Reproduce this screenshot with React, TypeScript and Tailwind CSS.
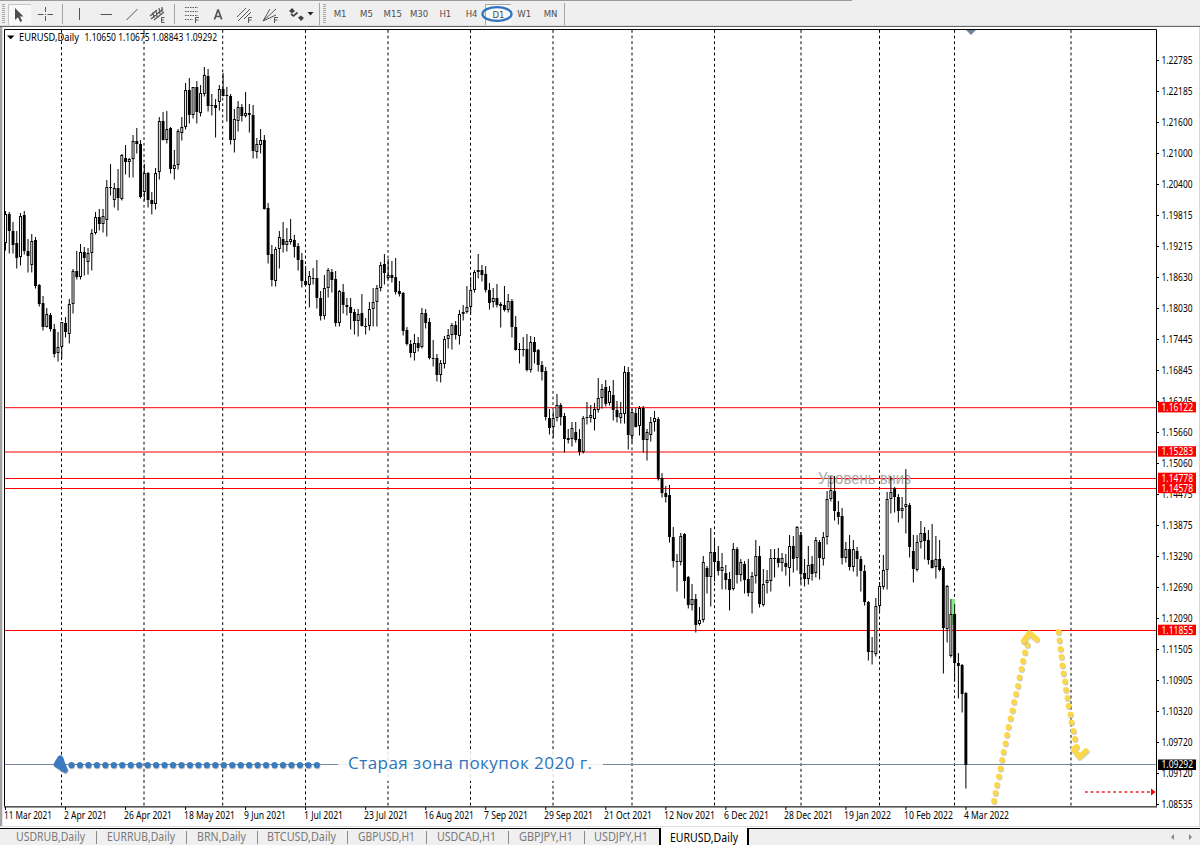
import React from "react";

type Candle = [number, number, number, number, number];

// high, body top, body bottom, low, 1 = up / 0 = down (chart units, y grows downwards)
const candles: Candle[] = [
  [211,214,243,250,1],[212,214,231,253,0],[222,231,245,253,0],[231,243,258,268,0],[213,216,257,265,1],[211,215,251,254,0],[239,251,256,272,0],[234,241,265,272,1],
  [237,240,286,288,0],[284,285,304,306,0],[296,303,327,330,0],[308,314,327,327,1],[313,315,329,331,0],[324,329,354,357,0],[332,347,353,361,1],[322,322,347,358,1],
  [317,323,332,337,0],[299,304,334,343,1],[269,271,304,313,1],[251,271,277,279,0],[244,252,277,279,1],[247,252,258,275,0],[248,253,262,274,1],[229,233,253,270,1],
  [212,217,233,234,1],[209,217,224,230,0],[209,216,224,232,1],[180,187,220,236,1],[164,187,188,195,0],[183,188,200,207,1],[169,188,198,210,0],[154,155,199,200,1],
  [145,158,162,174,0],[158,159,162,177,1],[135,141,159,177,1],[128,141,144,153,0],[140,144,197,198,0],[164,173,192,200,1],[172,173,200,207,0],[192,200,204,214,0],
  [168,173,204,209,1],[117,121,172,179,1],[112,121,140,140,0],[111,129,140,143,1],[127,128,169,173,0],[150,165,169,179,1],[129,131,165,169,1],[117,127,133,140,1],
  [83,90,127,129,1],[78,90,115,123,0],[87,87,115,118,1],[81,87,112,123,0],[85,93,113,116,1],[67,75,94,96,1],[69,76,106,111,0],[94,105,106,115,0],
  [99,105,108,137,0],[85,89,102,110,1],[73,89,96,96,0],[87,95,96,121,0],[94,96,140,144,0],[109,119,140,152,1],[101,107,121,131,1],[104,107,116,121,0],
  [92,113,116,117,1],[104,113,115,132,0],[105,115,151,158,0],[138,144,152,158,1],[129,140,145,153,1],[135,140,209,209,0],[203,208,255,263,0],[245,254,280,286,0],
  [247,249,281,286,1],[231,237,249,268,1],[222,239,245,252,0],[228,241,245,251,1],[219,239,242,244,1],[235,240,247,257,0],[243,246,260,270,0],[253,260,281,287,0],
  [266,281,285,285,0],[271,276,285,307,1],[268,278,279,284,0],[260,278,298,308,0],[291,298,316,320,0],[275,288,316,319,1],[268,270,288,297,1],[269,272,280,292,0],
  [271,279,323,326,0],[290,291,323,326,1],[284,292,305,313,0],[298,305,307,315,0],[298,307,313,329,0],[309,312,321,334,0],[309,314,321,336,1],[294,313,326,326,0],
  [318,326,327,334,0],[302,309,326,330,1],[288,302,309,326,1],[285,288,302,326,1],[262,265,288,291,1],[254,264,273,284,0],[259,275,278,279,1],[261,275,278,282,0],
  [258,277,292,294,0],[281,291,294,296,0],[292,293,331,335,0],[327,330,344,345,0],[340,344,353,357,0],[334,343,353,360,1],[337,343,348,351,0],[308,313,347,348,1],
  [309,313,323,328,0],[318,322,358,359,0],[340,358,359,366,0],[354,358,375,381,0],[360,363,375,382,1],[336,339,364,368,1],[329,335,339,348,1],[323,325,335,349,1],
  [321,325,335,339,0],[310,314,336,344,1],[305,312,314,320,0],[286,307,312,313,1],[277,290,307,314,1],[270,272,290,292,1],[254,270,272,278,1],[265,270,275,281,0],
  [266,274,290,292,0],[283,290,303,309,0],[288,298,302,307,1],[284,298,305,307,0],[302,304,306,327,0],[286,305,310,311,0],[294,301,310,312,1],[299,301,327,337,0],
  [316,327,350,350,0],[343,349,350,363,0],[337,349,350,356,0],[334,349,370,371,0],[336,342,370,372,1],[337,342,352,363,0],[349,350,365,371,0],[361,365,372,380,0],
  [367,371,417,420,0],[409,418,428,434,0],[411,418,427,437,1],[394,405,418,421,1],[403,405,417,425,0],[413,416,439,452,0],[429,438,440,443,0],[422,428,439,446,1],
  [422,432,440,442,0],[429,439,452,455,0],[416,418,452,453,1],[402,417,418,424,0],[405,415,418,422,1],[403,409,419,430,1],[378,398,410,412,1],[384,389,398,408,1],
  [380,387,404,406,0],[386,391,403,405,1],[380,395,410,420,0],[401,410,417,422,0],[402,413,418,423,1],[366,372,414,423,1],[367,372,435,449,0],[409,412,436,442,1],
  [408,413,427,427,0],[406,408,426,435,1],[406,408,440,452,0],[429,432,440,460,1],[417,422,435,441,1],[411,418,422,431,1],[417,419,479,480,0],[473,478,493,497,0],
  [486,493,497,502,0],[485,495,537,542,0],[527,537,561,567,0],[554,561,562,591,0],[533,536,562,565,1],[533,534,581,598,0],[576,577,605,608,0],[584,599,605,610,1],
  [594,599,625,632,0],[607,620,624,625,1],[556,562,620,622,1],[566,568,577,593,0],[528,552,577,606,1],[540,552,562,581,0],[546,561,571,575,0],[553,567,571,589,1],
  [565,573,580,589,0],[572,579,590,610,0],[543,549,589,590,1],[547,549,575,583,0],[559,562,575,581,1],[561,564,580,593,0],[559,579,593,596,0],[572,576,593,613,1],
  [540,556,576,583,1],[546,556,604,607,0],[569,584,605,606,1],[570,580,583,593,1],[549,558,581,591,1],[549,558,559,577,0],[548,558,563,567,0],[553,558,563,571,1],
  [554,563,567,575,0],[535,546,568,586,1],[536,546,559,572,0],[526,527,558,570,1],[532,535,574,583,0],[559,573,579,586,0],[546,565,579,584,1],[556,564,574,580,0],
  [537,540,573,577,1],[540,542,558,579,0],[532,537,559,565,1],[491,499,537,544,1],[476,490,499,501,1],[476,491,511,520,0],[501,512,517,524,0],[508,516,558,564,0],
  [542,549,558,562,1],[535,549,567,570,0],[540,549,567,571,1],[547,551,559,576,0],[556,559,571,591,0],[565,571,602,605,0],[601,602,652,660,0],[637,651,652,664,0],
  [598,606,654,656,1],[582,586,606,612,1],[555,570,587,589,1],[492,499,570,589,1],[476,492,499,513,1],[487,488,497,512,0],[494,497,511,522,0],[497,508,511,518,1],
  [469,504,507,533,1],[503,505,547,557,0],[535,551,569,582,0],[535,542,570,571,1],[521,533,542,548,1],[527,533,541,559,0],[530,540,560,564,0],[524,560,568,568,0],
  [536,559,567,578,1],[540,559,570,571,0],[566,568,628,673,0],[585,586,629,642,1],[599,614,656,657,1],[604,614,663,681,0],[653,663,666,698,0],[664,665,694,712,0],
  [692,693,765,788,0],
];

const FIRST_X = 5.5;
const STEP = 3.7515;

const separators = [61.5, 144, 222.7, 305.5, 388, 470.5, 553, 632, 714.5, 801, 879.5, 954.5, 1071];

const prices = [
  "1.22785", "1.22185", "1.21600", "1.21000", "1.20400", "1.19815", "1.19215", "1.18630", "1.18030",
  "1.17445", "1.16845", "1.16245", "1.15660", "1.15060", "1.14475", "1.13875", "1.13290", "1.12690",
  "1.12090", "1.11505", "1.10905", "1.10320", "1.09720", "1.09120", "1.08535",
];

const levels = [
  { price: "1.16122", y: 407.7 },
  { price: "1.15283", y: 452 },
  { price: "1.14778", y: 478.5 },
  { price: "1.14578", y: 488.5 },
  { price: "1.11855", y: 630.5 },
];

const dates: [string, number][] = [
  ["11 Mar 2021", 48], ["2 Apr 2021", 43], ["26 Apr 2021", 48], ["18 May 2021", 51], ["9 Jun 2021", 42],
  ["1 Jul 2021", 39], ["23 Jul 2021", 44], ["16 Aug 2021", 50], ["7 Sep 2021", 44], ["29 Sep 2021", 49],
  ["21 Oct 2021", 48], ["12 Nov 2021", 51], ["6 Dec 2021", 45], ["28 Dec 2021", 49], ["19 Jan 2022", 47],
  ["10 Feb 2022", 49], ["4 Mar 2022", 45],
];

const upDots = [
  [994, 801], [995.5, 793], [997, 785], [999, 776.5], [1000.5, 768.5], [1002, 760], [1003.5, 752],
  [1005.5, 743.5], [1007, 735], [1008.5, 727], [1010.5, 718.5], [1012.5, 710.5], [1014, 702],
  [1016, 694], [1018, 686], [1019.5, 677.5], [1021.5, 669], [1023, 661], [1025, 652.5], [1027.5, 645],
];

const downDots = [
  [1058.5, 632], [1059.5, 640.5], [1060.5, 649], [1061.5, 657], [1062.5, 665.5], [1063.5, 673.5],
  [1065, 681.5], [1066, 690], [1067.5, 698], [1068.5, 706], [1070.5, 714.5], [1071.5, 722.5],
  [1073.5, 731], [1075, 739], [1076.5, 747],
];

const timeframes = ["M1", "M5", "M15", "M30", "H1", "H4", "D1", "W1", "MN"];

const tabs = [
  { name: "USDRUB,Daily", cls: "w-[93px] pl-[12px]", len: 69 },
  { name: "EURRUB,Daily", cls: "w-[90px] pl-[10px]", len: 68 },
  { name: "BRN,Daily", cls: "w-[71px] pl-[10px]", len: 49 },
  { name: "BTCUSD,Daily", cls: "w-[90px] pl-[9px]", len: 69 },
  { name: "GBPUSD,H1", cls: "w-[79px] pl-[10px]", len: 57 },
  { name: "USDCAD,H1", cls: "w-[82px] pl-[10px]", len: 59 },
  { name: "GBPJPY,H1", cls: "w-[76px] pl-[10px]", len: 54 },
  { name: "USDJPY,H1", cls: "w-[74px] pl-[9px]", len: 54 },
];

function Tool({ children }: { children: React.ReactNode }) {
  return (
    <svg width="26" height="22" viewBox="0 0 26 22" fill="none" stroke="#555" className="shrink-0">
      {children}
    </svg>
  );
}

function Grip() {
  return (
    <svg width="3" height="20" viewBox="0 0 3 20" className="shrink-0">
      <path d="M1.5 0V20" stroke="#aaa" strokeWidth="3" strokeDasharray="1 1" />
    </svg>
  );
}

function Toolbar() {
  return (
    <div className="relative flex h-[25px] shrink-0 items-center bg-[#efefef] pl-[2px] pt-[3px]">
      <div className="absolute left-0 top-0 h-px w-[852px] bg-[#9a9a9a]" />
      <Grip />
      <div className="ml-[3px] flex h-[21px] w-[23px] items-center justify-center border-l border-t border-[#c4c4c4] bg-[#f8f8f8] pr-[3px]">
        <svg width="12" height="16" viewBox="0 0 12 16">
          <path d="M2 1V13L5 10.3L7.2 15L9.2 14L7 9.5H10.5Z" fill="#4d4d4d" />
        </svg>
      </div>
      <div className="ml-[2px] flex items-center">
        <Tool>
          <path d="M12.5 4V9M12.5 13V18M5 11.5H10.5M14.5 11.5H20M12 11.5H13" />
        </Tool>
      </div>
      <div className="ml-[3px] h-[20px] w-px bg-[#a5a5a5]" />
      <div className="ml-[3px] flex items-center">
        <Tool>
          <path d="M13.5 5V17" />
        </Tool>
        <Tool>
          <path d="M8.500 11.500H20" />
        </Tool>
        <Tool>
          <path d="M8.500 17L19.500 6" />
        </Tool>
        <Tool>
          <path d="M6 13L13 7M7 16L19 6M10 17L20 9M9 9L10 15M12 7L13 14M15 5L16 11M18 4V9" strokeWidth="1.2" />
          <path d="M20.500 14.500H17.500V19.500H20.500M17.500 17H20" />
        </Tool>
      </div>
      <div className="ml-[4px] h-[20px] w-px bg-[#a5a5a5]" />
      <div className="ml-[4px] flex items-center">
        <Tool>
          <path d="M6 4.500H19M6 8.500H19M6 12.500H19M6 16.500H14" strokeDasharray="1.500 1" />
          <path d="M16.500 20V14.500H20M16.500 17H19.500" />
        </Tool>
        <Tool>
          <path d="M9.500 16.500L12.900 7H13.300L16.700 16.500M10.600 13.500H15.600" strokeWidth="1.700" />
        </Tool>
        <Tool>
          <path d="M6 14L15 5M7 18L19 6M13 16L20 9" />
          <path d="M17.500 20V14.500H21M17.500 17H20.500" />
        </Tool>
        <Tool>
          <path d="M6 18L13 6M6 18L19 6M6 18L19 12" />
          <path d="M17.500 20V14.500H21M17.500 17H20.500" />
        </Tool>
        <Tool>
          <path d="M6 8L9 5L12 8L9 10.500ZM15 14.500L18 12.500L21 15L18 18Z" fill="#444" stroke="none" />
          <path d="M8 11L10.500 13L14.500 9.500" stroke="#444" strokeWidth="1.700" />
        </Tool>
      </div>
      <svg width="7" height="4" viewBox="0 0 7 4" className="-ml-[2px]">
        <path d="M0.500 0H6.500L3.500 3.500Z" fill="#222" />
      </svg>
      <div className="ml-[5px] h-[22px] w-px bg-[#a5a5a5]" />
      <div className="ml-[3px]">
        <Grip />
      </div>
      <div className="flex h-full w-[238px] items-center pl-px text-[9.5px] text-[#505050]">
        {timeframes.map((t) => (
          <div
            key={t}
            className={`relative flex h-[21px] w-[26.300px] shrink-0 items-center justify-center pt-px ${
              t === "D1" ? "border-l border-t border-[#a8a8a8] bg-[#f8f8f8]" : ""
            }`}
          >
            {t}
            {t === "D1" && (
              <svg width="32" height="18" viewBox="0 0 32 18" className="absolute -left-[5px] top-0">
                <ellipse cx="16" cy="9" rx="14.500" ry="6.900" fill="none" stroke="#2f74c0" strokeWidth="2.300" />
              </svg>
            )}
          </div>
        ))}
      </div>
      <div className="h-[22px] w-px bg-[#a5a5a5]" />
    </div>
  );
}

function Candles() {
  return (
    <g>
      {candles.map(([high, top, bottom, low, up], i) => {
        const x = FIRST_X + i * STEP;
        const h = Math.max(1, bottom - top);
        return (
          <g key={i}>
            <rect x={x - 0.5} y={high} width={1} height={low - high + 0.5} />
            <rect x={x - 1.45} y={top} width={2.9} height={h} />
            {up === 1 && h > 2 && <rect x={x - 0.5} y={top + 1} width={1} height={h - 2} fill="#fff" />}
          </g>
        );
      })}
    </g>
  );
}

function PriceTag({ price, y, fill }: { price: string; y: number; fill: string }) {
  return (
    <g>
      <rect x={1158} y={y - 5.5} width={38} height={10.5} fill={fill} />
      <text x={1161.5} y={y + 3.3} fill="#fff" textLength={31.5} lengthAdjust="spacingAndGlyphs">
        {price}
      </text>
    </g>
  );
}

function Dots({ points, fill, r }: { points: number[][]; fill: string; r: number }) {
  return (
    <g>
      {points.map(([x, y]) => (
        <g key={`${x}-${y}`}>
          <circle cx={x + 0.6} cy={y + 1} r={r} fill="#777" opacity={0.4} />
          <circle cx={x} cy={y} r={r} fill={fill} />
        </g>
      ))}
    </g>
  );
}

function Chart() {
  const blueDots = Array.from({ length: 30 }, (_, i) => [71.5 + i * 8.46, 765.2]);

  return (
    <svg
      width="1200"
      height="799"
      viewBox="0 27 1200 799"
      className="block shrink-0 bg-white font-['Noto_Sans',sans-serif] text-[10px]"
    >
      {/* window frame */}
      <rect x={0} y={27} width={2} height={799} fill="#a3a3a3" />
      <rect x={2} y={27} width={1} height={799} fill="#e4e4e4" />
      <rect x={1199} y={27} width={1} height={799} fill="#d8d8d8" />
      <path d="M4.500 807V29.500H1156.500V807" fill="none" stroke="#000" />
      <rect x={4} y={806} width={1153} height={1.600} fill="#555" />

      {separators.map((x) => (
        <path key={x} d={`M${x} 30V806`} stroke="#000" strokeDasharray="2.820 2.820" />
      ))}
      {levels.map((l) => (
        <path key={l.price} d={`M5 ${l.y}H1156`} stroke="#fb0000" />
      ))}
      <path d="M5 764.500H1156" stroke="#778a9b" />

      <path d="M7 35.500H14.500L10.750 39.300Z" />
      <text x={19} y={41} textLength={60} lengthAdjust="spacingAndGlyphs">EURUSD,Daily</text>
      <text x={84.500} y={41} textLength={132.500} lengthAdjust="spacingAndGlyphs">
        1.10650 1.10675 1.08843 1.09292
      </text>
      <path d="M966 30H976L971 35Z" fill="#708499" />

      <text
        x={818}
        y={484}
        fill="#a9a9a9"
        className="font-['Liberation_Sans',sans-serif] text-[16px]"
        textLength={93}
        lengthAdjust="spacingAndGlyphs"
      >
        Уровень вниз
      </text>

      <rect x={951.500} y={599} width={3.500} height={26} fill="#7be07b" />
      <Candles />
      <rect x={952.500} y={599} width={1.600} height={15} fill="#8ff08f" />

      {prices.map((p, i) => (
        <g key={p}>
          <path d={`M1157 ${60.500 + i * 31}H1159`} stroke="#000" />
          <text x={1161.500} y={64.200 + i * 31} textLength={31} lengthAdjust="spacingAndGlyphs">{p}</text>
        </g>
      ))}
      {levels.map((l) => (
        <PriceTag key={l.price} price={l.price} y={l.y - 0.3} fill="#fb0000" />
      ))}
      <PriceTag price="1.09292" y={765} fill="#000" />

      {dates.map(([d, len], i) => (
        <g key={d}>
          <path d={`M${5.500 + i * 60.030} 807V810`} stroke="#000" />
          <text x={4 + i * 60} y={819} textLength={len} lengthAdjust="spacingAndGlyphs">{d}</text>
        </g>
      ))}

      {/* pending target */}
      <path d="M1085 792H1151" stroke="#fb2020" strokeWidth={1.400} strokeDasharray="2.820 2.820" />
      <path d="M1151 788.500L1155.500 792L1151 795.500Z" fill="#fb0000" />

      {/* hand drawn marks */}
      <rect x={338} y={750} width={265} height={31} fill="#fff" opacity={0.85} />
      <Dots points={blueDots} fill="#3a7bc0" r={3.100} />
      <path d="M61 759.500L57 765.500L65.500 771" fill="none" stroke="#888" strokeOpacity={0.5} strokeWidth={6} strokeLinecap="round" strokeLinejoin="round" />
      <path d="M60.300 758L56.500 764.500L65 770Z" fill="#3a7bc0" stroke="#3a7bc0" strokeWidth={5.500} strokeLinecap="round" strokeLinejoin="round" />
      <text x={348} y={769} fill="#2b73bb" className="font-['Open_Sans',sans-serif] text-[17px]" textLength={244}>
        Старая зона покупок 2020 г.
      </text>

      <Dots points={upDots} fill="#fbd84b" r={2.900} />
      <Dots points={downDots} fill="#fbd84b" r={2.900} />
      <path d="M1024 642.500L1030 634.500L1037.500 640.500M1074 750.500L1080 758L1087 752" fill="none" stroke="#888" strokeOpacity={0.4} strokeWidth={5.500} strokeLinecap="round" strokeLinejoin="round" />
      <path d="M1023.500 641L1029.500 633L1037 639.500M1073.500 749L1079.500 757L1086 751" fill="none" stroke="#fbd84b" strokeWidth={5.500} strokeLinecap="round" strokeLinejoin="round" />
    </svg>
  );
}

function TabBar() {
  return (
    <div className="flex h-[17px] shrink-0 bg-[#efefef] font-['Noto_Sans',sans-serif] text-[12px] text-[#7a7a7a]">
      <div className="flex h-[17px] border-t border-black pl-[4px]">
        {tabs.map((t, i) => (
          <div key={t.name} className={`flex items-center justify-between ${t.cls}`}>
            <svg width={t.len} height="16" className="shrink-0 overflow-visible">
              <text x="0" y="12" fill="currentColor" textLength={t.len} lengthAdjust="spacingAndGlyphs">{t.name}</text>
            </svg>
            {i < tabs.length - 1 && <div className="h-[13px] w-px bg-[#8a8a8a]" />}
          </div>
        ))}
      </div>
      <div className="flex w-[90px] items-center justify-center border-x-2 border-black bg-white text-black">
        <svg width="68" height="16" className="overflow-visible">
          <text x="0" y="12.500" fill="currentColor" textLength="68" lengthAdjust="spacingAndGlyphs">EURUSD,Daily</text>
        </svg>
      </div>
      <div className="flex grow items-center justify-end gap-[15px] border-t border-black pr-[8px]">
        <svg width="3" height="6"><path d="M3 0V6L0 3Z" fill="#888" /></svg>
        <svg width="3" height="6"><path d="M0 0V6L3 3Z" fill="#888" /></svg>
      </div>
    </div>
  );
}

export default function App() {
  return (
    <div className="flex h-[845px] w-[1200px] flex-col overflow-hidden bg-white font-['DejaVu_Sans_Condensed','DejaVu_Sans',sans-serif]">
      <Toolbar />
      <div className="h-[2px] shrink-0 border-b border-[#666] bg-[#dcdcdc]" />
      <Chart />
      <div className="h-[2px] shrink-0 border-t border-[#ddd] bg-white" />
      <TabBar />
    </div>
  );
}
